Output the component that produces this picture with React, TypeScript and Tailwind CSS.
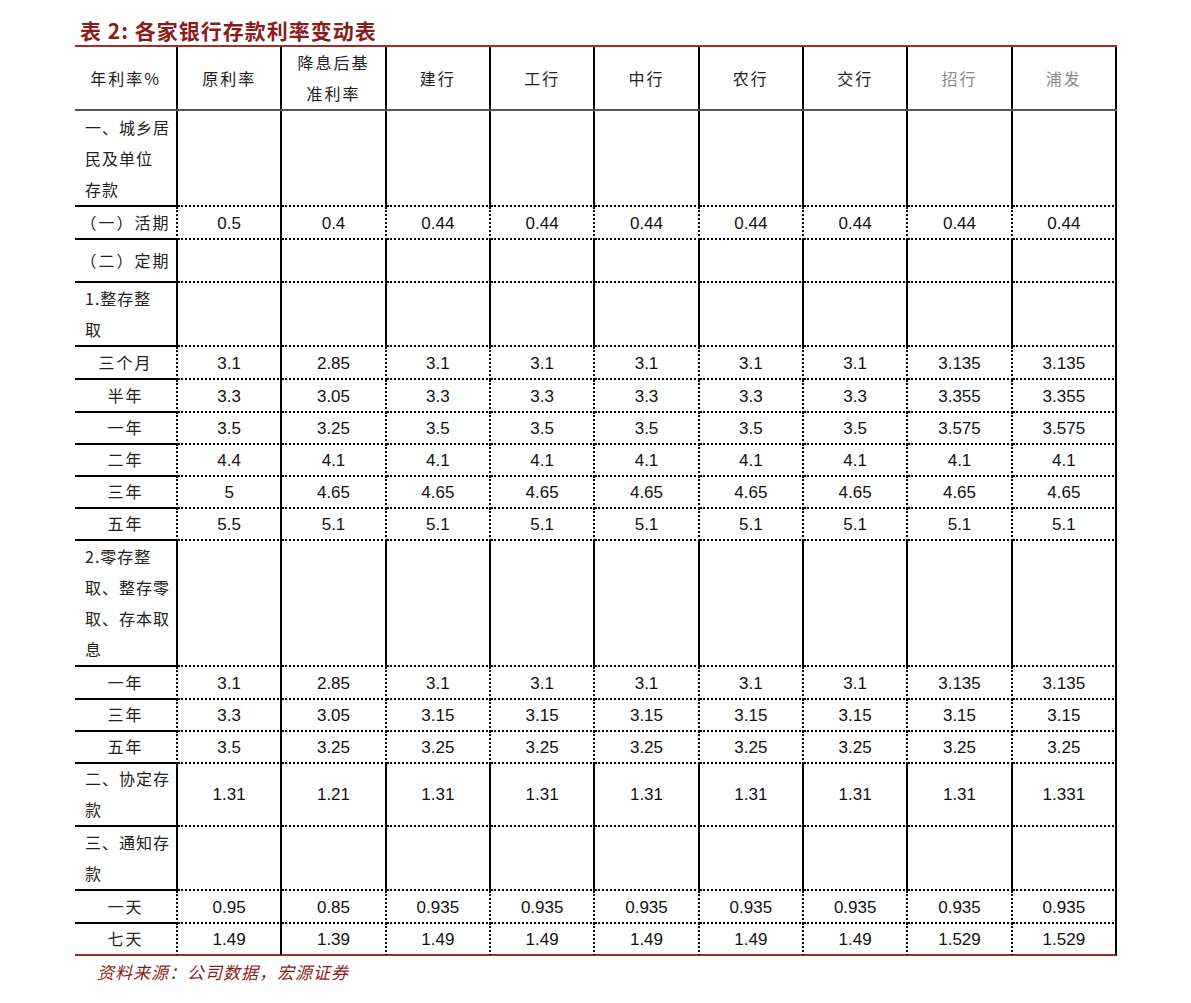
import React from "react";

type Row = {
  label: string[];
  h: number;
  values?: string[];
  center?: boolean;
};

const banks = ["原利率", "降息后基|准利率", "建行", "工行", "中行", "农行", "交行", "招行", "浦发"];

const rows: Row[] = [
  { label: ["一、城乡居", "民及单位", "存款"], h: 96 },
  { label: ["（一）活期"], h: 32, center: true, values: ["0.5", "0.4", "0.44", "0.44", "0.44", "0.44", "0.44", "0.44", "0.44"] },
  { label: ["（二）定期"], h: 44, center: true },
  { label: ["1.整存整", "取"], h: 64 },
  { label: ["三个月"], h: 33, center: true, values: ["3.1", "2.85", "3.1", "3.1", "3.1", "3.1", "3.1", "3.135", "3.135"] },
  { label: ["半年"], h: 32, center: true, values: ["3.3", "3.05", "3.3", "3.3", "3.3", "3.3", "3.3", "3.355", "3.355"] },
  { label: ["一年"], h: 32, center: true, values: ["3.5", "3.25", "3.5", "3.5", "3.5", "3.5", "3.5", "3.575", "3.575"] },
  { label: ["二年"], h: 32, center: true, values: ["4.4", "4.1", "4.1", "4.1", "4.1", "4.1", "4.1", "4.1", "4.1"] },
  { label: ["三年"], h: 32, center: true, values: ["5", "4.65", "4.65", "4.65", "4.65", "4.65", "4.65", "4.65", "4.65"] },
  { label: ["五年"], h: 33, center: true, values: ["5.5", "5.1", "5.1", "5.1", "5.1", "5.1", "5.1", "5.1", "5.1"] },
  { label: ["2.零存整", "取、整存零", "取、存本取", "息"], h: 126 },
  { label: ["一年"], h: 32, center: true, values: ["3.1", "2.85", "3.1", "3.1", "3.1", "3.1", "3.1", "3.135", "3.135"] },
  { label: ["三年"], h: 32, center: true, values: ["3.3", "3.05", "3.15", "3.15", "3.15", "3.15", "3.15", "3.15", "3.15"] },
  { label: ["五年"], h: 32, center: true, values: ["3.5", "3.25", "3.25", "3.25", "3.25", "3.25", "3.25", "3.25", "3.25"] },
  { label: ["二、协定存", "款"], h: 64, values: ["1.31", "1.21", "1.31", "1.31", "1.31", "1.31", "1.31", "1.31", "1.331"] },
  { label: ["三、通知存", "款"], h: 64 },
  { label: ["一天"], h: 32, center: true, values: ["0.95", "0.85", "0.935", "0.935", "0.935", "0.935", "0.935", "0.935", "0.935"] },
  { label: ["七天"], h: 32, center: true, values: ["1.49", "1.39", "1.49", "1.49", "1.49", "1.49", "1.49", "1.529", "1.529"] },
];

const cjk = "font-['Noto_Sans_CJK_SC',sans-serif]";
const num = "font-['Liberation_Sans','Noto_Sans_CJK_SC',sans-serif]";

export default function App() {
  return (
    <div className="min-h-screen bg-white pt-[16px]">
      <div className="ml-[75px] w-[1042px]">
        {/* Title */}
        <div className={`pl-[5px] h-[29px] leading-[29px] text-[21px] font-bold tracking-[1px] text-[#8b1c1c] ${cjk}`}>
          表 2:&nbsp;各家银行存款利率变动表
        </div>

        {/* Table */}
        <div className="border-t-2 border-[#a52a2a]">
          {/* Header */}
          <div className="grid grid-cols-[103px_repeat(9,1fr)] h-[64px] border-b-2 border-[#555]">
            <div className={`flex items-center justify-center border-r-2 border-black text-[16px] tracking-[2px] text-[#222] ${cjk}`}>
              年利率%
            </div>
            {banks.map((b, i) => (
              <div
                key={b}
                className={`flex flex-col items-center justify-center leading-[31px] text-[16px] tracking-[2px] border-r-2 border-black ${cjk} ${
                  i >= 7 ? "text-[#8a8a8a]" : "text-[#222]"
                }`}
              >
                {b.split("|").map((t) => (
                  <span key={t}>{t}</span>
                ))}
              </div>
            ))}
          </div>

          {/* Body */}
          {rows.map((r, ri) => {
            const last = ri === rows.length - 1;
            const valueRow = !!r.values && r.h <= 33;
            return (
              <div
                key={ri}
                className="grid grid-cols-[103px_repeat(9,1fr)]"
                style={{ height: r.h }}
              >
                <div
                  className={`flex flex-col justify-center border-r-2 border-b-2 text-[16px] text-[#222] leading-[31px] ${cjk} ${
                    r.center ? "items-center tracking-[2px]" : "items-start pl-[10px] tracking-[1px]"
                  } ${last ? "border-b-[#a52a2a]" : "border-b-black"} ${
                    valueRow ? "border-r-black [border-right-style:dotted]" : "border-r-black"
                  }`}
                >
                  {r.label.map((t, i) => (
                    <span key={i}>{t}</span>
                  ))}
                </div>
                {Array.from({ length: 9 }).map((_, ci) => {
                  const solidRight = !valueRow || ci === 0 || ci === 8;
                  return (
                    <div
                      key={ci}
                      className={`flex items-center justify-center pt-[2px] border-r-2 border-b-2 text-[17px] text-[#111] ${num} ${
                        last ? "border-b-[#a52a2a]" : "border-b-black [border-bottom-style:dotted]"
                      } ${solidRight ? "border-r-black" : "border-r-black [border-right-style:dotted]"}`}
                    >
                      {r.values ? r.values[ci] : ""}
                    </div>
                  );
                })}
              </div>
            );
          })}
        </div>

        {/* Source */}
        <div className={`pl-[22px] mt-[4px] text-[17px] italic text-[#8b1c1c] tracking-[1px] ${cjk}`}>
          资料来源：公司数据，宏源证券
        </div>
      </div>
    </div>
  );
}
